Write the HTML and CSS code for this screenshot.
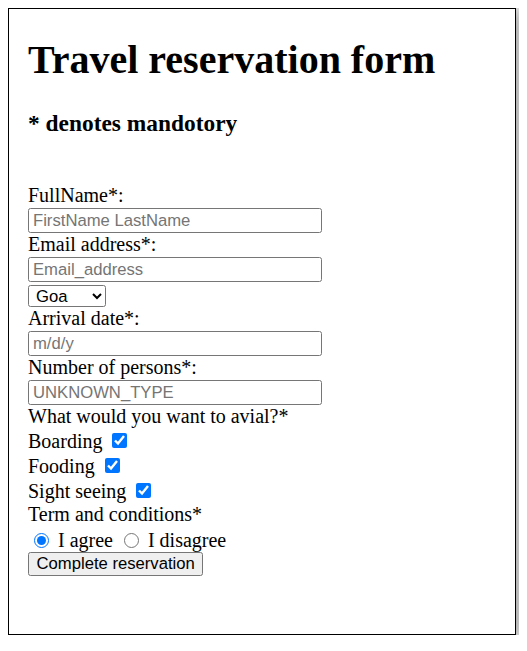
FILE: index.html
```html
<!DOCTYPE html>
<html lang="en">
<head>
<meta charset="utf-8">
<title>Travel reservation form</title>
<link rel="stylesheet" href="styles.css">
</head>
<body>
<div class="frame">
  <h1 class="title">Travel reservation form</h1>
  <h3 class="note">* denotes mandotory</h3>
  <form class="form">
    <label class="lbl" for="fullname">FullName*:</label>
    <input class="txt" id="fullname" type="text" placeholder="FirstName LastName">
    <label class="lbl" for="email">Email address*:</label>
    <input class="txt" id="email" type="text" placeholder="Email_address">
    <select class="sel">
      <option>Goa</option>
    </select>
    <label class="lbl" for="date">Arrival date*:</label>
    <input class="txt" id="date" type="text" placeholder="m/d/y">
    <label class="lbl" for="persons">Number of persons*:</label>
    <input class="txt" id="persons" type="text" placeholder="UNKNOWN_TYPE">
    <div class="lbl">What would you want to avial?*</div>
    <div class="chkrow">Boarding <input class="chk" type="checkbox" checked></div>
    <div class="chkrow">Fooding <input class="chk" type="checkbox" checked></div>
    <div class="chkrow">Sight seeing <input class="chk" type="checkbox" checked></div>
    <div class="lbl">Term and conditions*</div>
    <div class="radrow"><input class="rad" type="radio" name="terms" checked> I agree <input class="rad" type="radio" name="terms"> I disagree</div>
    <button class="btn" type="button">Complete reservation</button>
  </form>
</div>
</body>
</html>
```

FILE: styles.css
```css
html, body {
  background: #ffffff;
}
body {
  margin: 8px;
  font-family: "Liberation Serif", "Times New Roman", serif;
  color: #000;
}
.frame {
  box-sizing: border-box;
  width: 508px;
  height: 627px;
  border: 1px solid #000;
  background: #fff;
  padding: 0 0 0 19px;
  box-shadow: 0 3px 18px 4px rgba(0, 0, 0, 0.45);
}
.title {
  margin: 28px 0 0;
  font-size: 40px;
  line-height: 46px;
  font-weight: bold;
}
.note {
  margin: 27px 0 0;
  font-size: 23.4px;
  line-height: 27px;
  font-weight: bold;
}
.form {
  display: flex;
  flex-direction: column;
  align-items: flex-start;
  margin-top: 47px;
  font-size: 20px;
}
.lbl {
  display: block;
  height: 23px;
  line-height: 23px;
  white-space: nowrap;
}
.txt {
  box-sizing: border-box;
  width: 294px;
  height: 25px;
  margin: 1px 0 0;
  padding: 0 4px;
  border: 1px solid #767676;
  border-radius: 2.5px;
  background: #fff;
  font-family: "Liberation Sans", Arial, sans-serif;
  font-size: 16.67px;
  color: #000;
}
.txt::placeholder {
  color: #757575;
}
.sel {
  box-sizing: border-box;
  width: 78px;
  height: 22px;
  margin: 3px 0 0;
  padding: 0 0 0 3px;
  border: 1px solid #767676;
  border-radius: 2.5px;
  background: #fff;
  font-family: "Liberation Sans", Arial, sans-serif;
  font-size: 16.67px;
  color: #000;
}
.chkrow {
  height: 25px;
  line-height: 27px;
  white-space: nowrap;
}
.chk {
  width: 15px;
  height: 15px;
  margin: 0 0 0 5px;
  vertical-align: 0;
  accent-color: #0075ff;
}
.radrow {
  height: 26px;
  line-height: 28px;
  white-space: nowrap;
}
.rad {
  width: 15px;
  height: 15px;
  margin: 0 4px 0 6px;
  vertical-align: -1px;
  accent-color: #0075ff;
}
.btn {
  box-sizing: border-box;
  height: 24px;
  margin: 0;
  padding: 0 7.5px;
  border: 1px solid #767676;
  border-radius: 2.5px;
  background: #efefef;
  font-family: "Liberation Sans", Arial, sans-serif;
  font-size: 16.67px;
  color: #000;
}
```
